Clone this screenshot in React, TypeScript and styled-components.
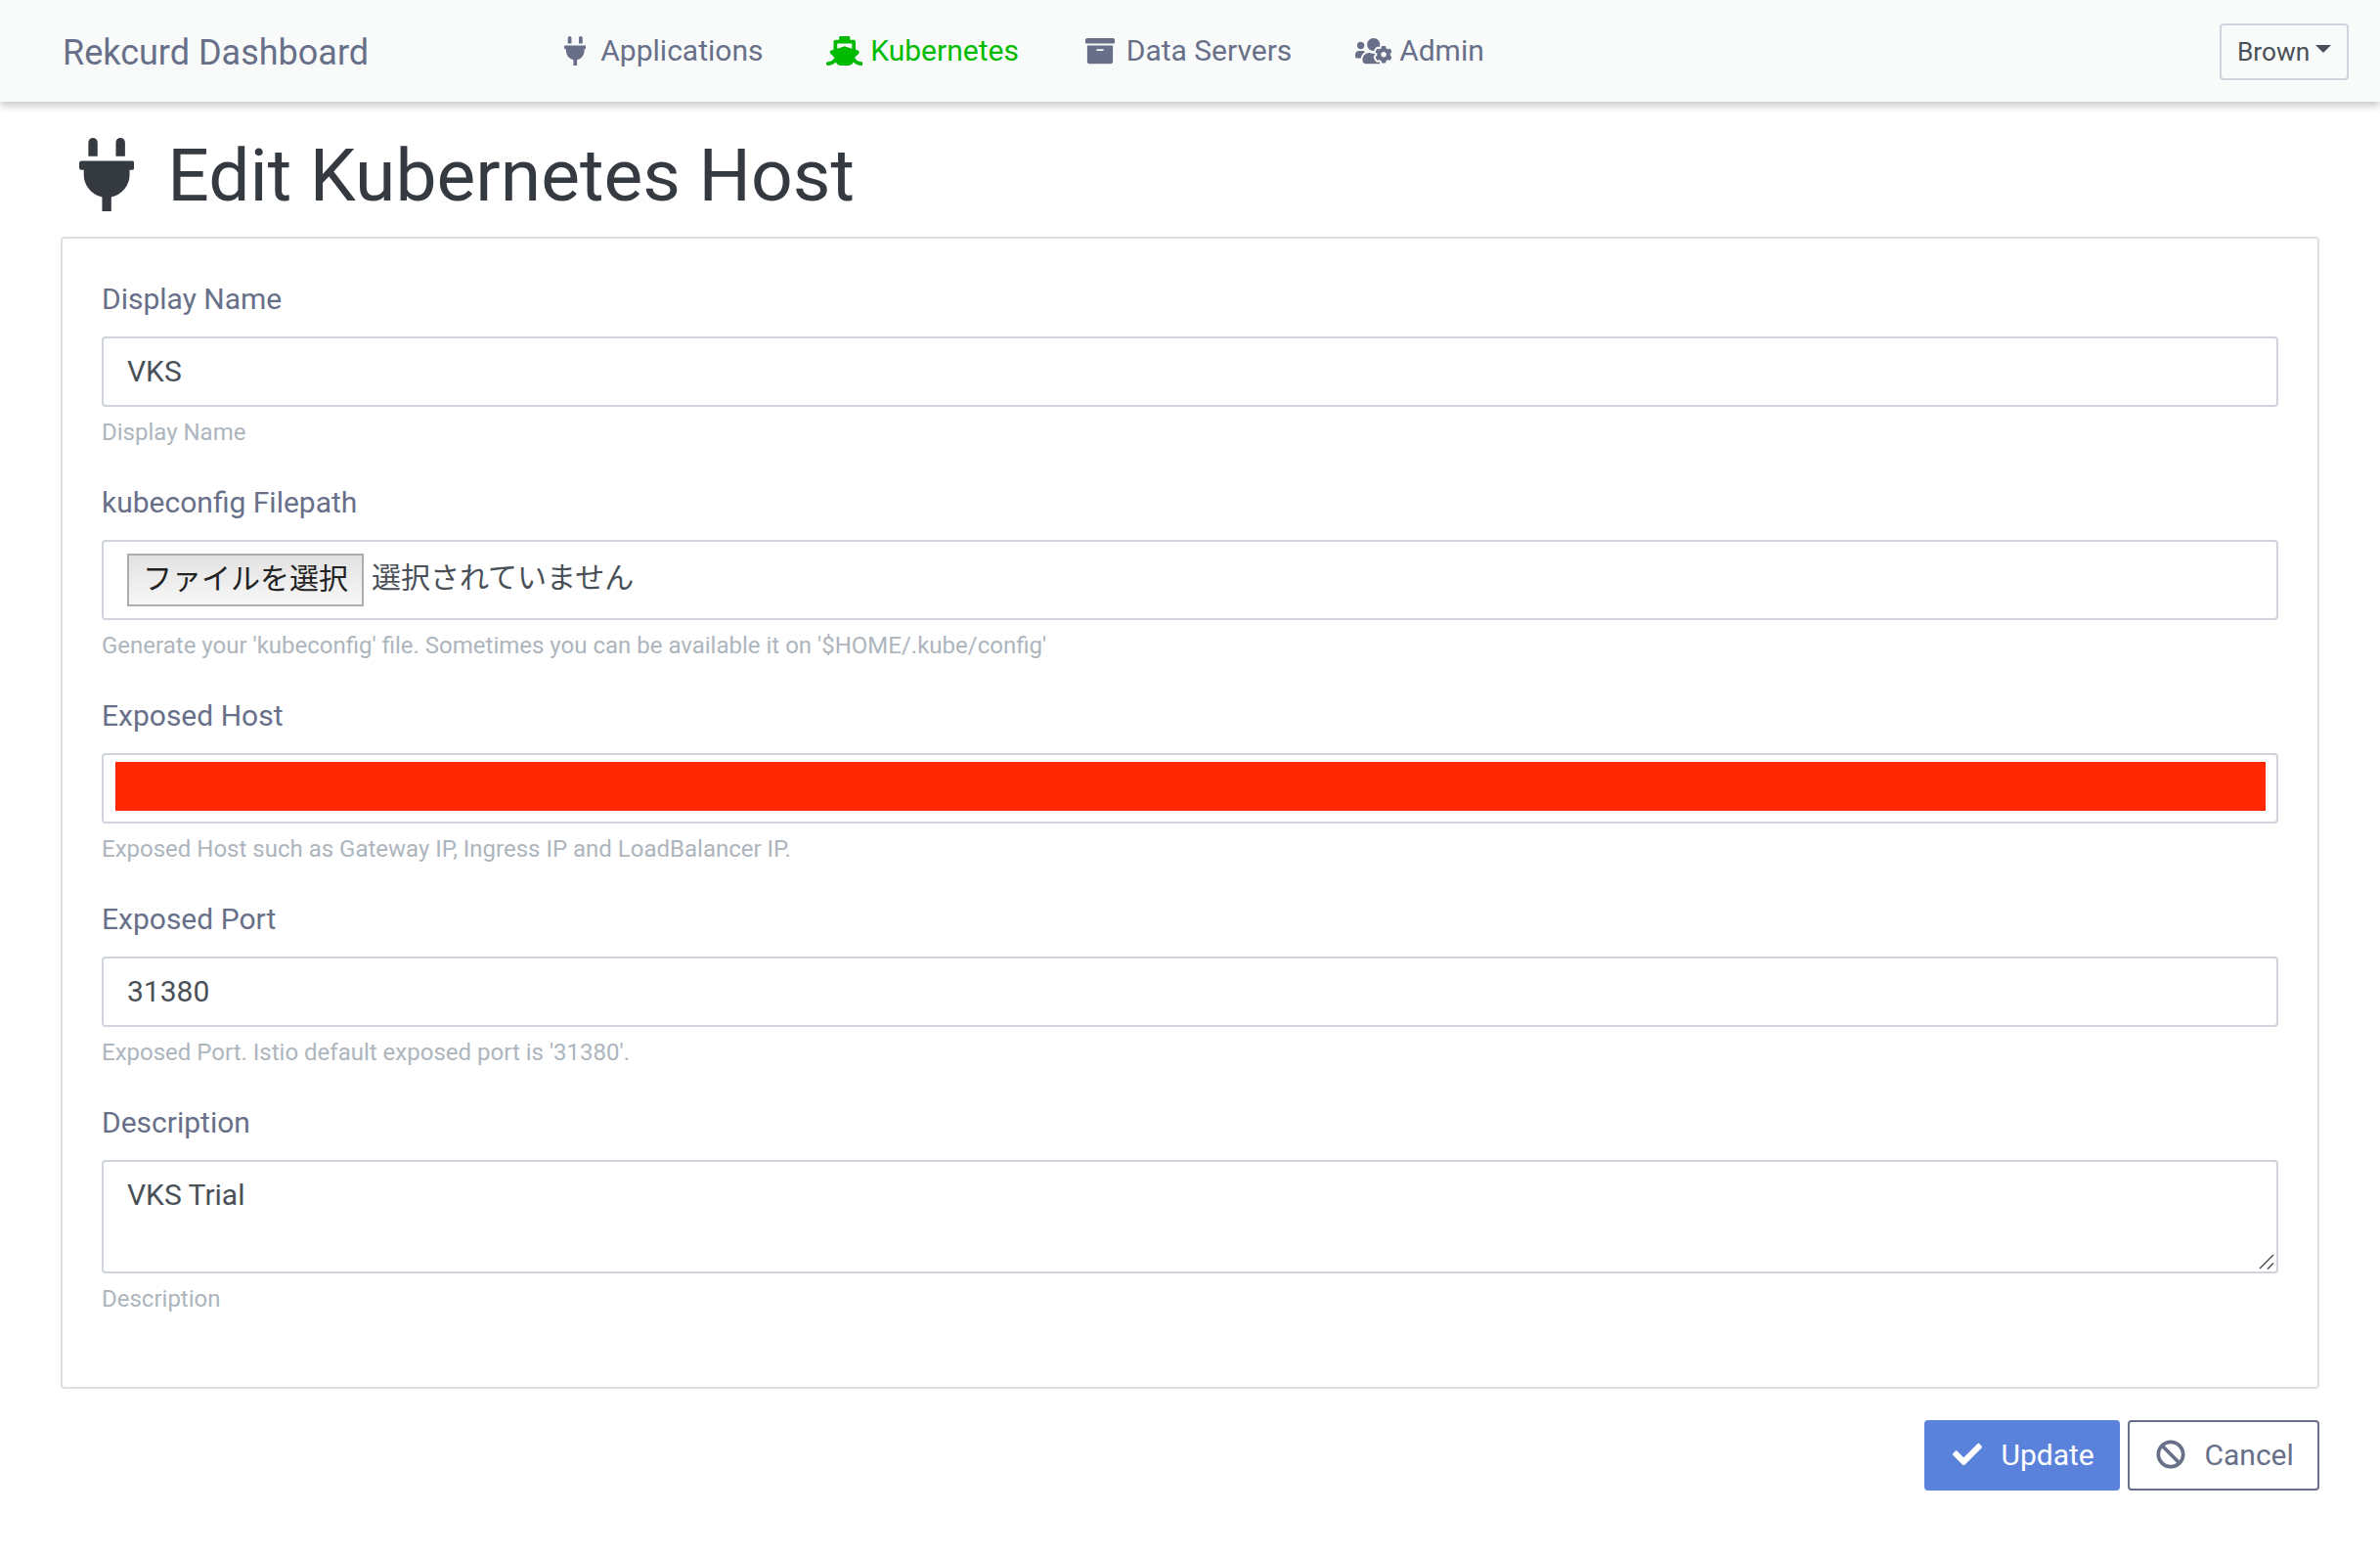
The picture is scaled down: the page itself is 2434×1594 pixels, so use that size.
import React from "react";
import styled, { createGlobalStyle, css } from "styled-components";
import { FaPlug, FaShip, FaArchive, FaUsersCog, FaCheck, FaBan } from "react-icons/fa";

const GlobalStyle = createGlobalStyle`
  * { box-sizing: border-box; }
  body {
    margin: 0;
    background: #fff;
    color: #687089;
    font-family: Roboto, "Noto Sans CJK JP", sans-serif;
    font-size: 30px;
    line-height: 45px;
  }
`;

const Header = styled.header`
  display: flex;
  align-items: flex-start;
  height: 104px;
  padding: 0 32px 0 64px;
  background: #f9fbfa;
  box-shadow: 0 4px 8px rgba(0, 0, 0, 0.22);
`;

const Brand = styled.a`
  width: 505px;
  padding-top: 27px;
  font-size: 36px;
  line-height: 54px;
`;

const Nav = styled.nav`
  display: flex;
  flex: 1;
  gap: 64.5px;
  padding-top: 29px;
`;

const NavLink = styled.a<{ $active?: boolean }>`
  display: flex;
  align-items: center;
  gap: 7.8px;
  color: ${(p) => (p.$active ? "#00bb00" : "#687089")};
`;

const IconSlot = styled.span<{ $width?: number }>`
  display: flex;
  justify-content: center;
  width: 37.5px;
  svg {
    flex: none;
    width: ${(p) => p.$width ?? 30}px;
    height: 30px;
  }
`;

const UserButton = styled.button`
  display: flex;
  align-items: center;
  width: 132px;
  height: 58px;
  margin-top: 24px;
  padding: 0 0 0 16px;
  border: 2px solid #ced4da;
  border-radius: 4px;
  background: #f9fbfa;
  color: #495057;
  font: 26.25px/40px Roboto, sans-serif;
`;

const Caret = styled.span`
  margin: -6px 0 0 6px;
  border: 8px solid transparent;
  border-top-color: currentColor;
  border-bottom: 0;
`;

const Main = styled.main`
  padding: 0 62px;
`;

const Title = styled.h1`
  display: flex;
  align-items: center;
  gap: 34px;
  height: 92px;
  margin: 29px 0 17px;
  padding-left: 19px;
  color: #343a40;
  font-size: 75px;
  font-weight: 400;
  line-height: 92px;
  svg { flex: none; width: 56.25px; height: 75px; margin-top: -2px; }
`;

const Card = styled.form`
  padding: 39px 40px 41px;
  border: 2px solid #dfdfdf;
  border-radius: 4px;
`;

const Group = styled.div`
  display: flex;
  flex-direction: column;
  margin-bottom: 31px;
`;

const Label = styled.label`
  height: 45px;
  margin-bottom: 16px;
`;

const Help = styled.small`
  height: 36px;
  margin-top: 8px;
  color: #adb5bd;
  font-size: 24px;
  line-height: 36px;
`;

const control = css`
  width: 100%;
  border: 2px solid #ced4da;
  border-radius: 4px;
  background: #fff;
  color: #495057;
  font: 30px/45px Roboto, "Noto Sans CJK JP", sans-serif;
  outline: none;
`;

const Input = styled.input`
  ${control}
  height: 72px;
  padding: 0 24px 2px;
`;

const FileInput = styled.div`
  ${control}
  display: flex;
  align-items: flex-start;
  gap: 8px;
  height: 82px;
  padding: 12px 24px;
`;

const FileButton = styled.button`
  width: 242px;
  height: 54px;
  padding: 0 0 8px;
  border: 2px solid #adadad;
  background: linear-gradient(#e2e2e2, #f7f7f7);
  color: #222;
  font: 30px/42px "Noto Sans CJK JP", sans-serif;
`;

const FileStatus = styled.span`
  line-height: 50px;
`;

const MaskedInput = styled.div`
  ${control}
  height: 72px;
  padding: 7px 11px 11px 11.5px;
`;

const Mask = styled.div`
  height: 50px;
  background: #ff2800;
`;

const TextBox = styled.div`
  ${control}
  display: flex;
  justify-content: space-between;
  height: 116px;
  padding: 11px 2px 2px 24px;
`;

const Grip = styled.svg`
  align-self: flex-end;
  width: 16px;
  height: 16px;
`;

const Actions = styled.div`
  display: flex;
  justify-content: flex-end;
  gap: 8px;
  margin-top: 32px;
`;

const ActionButton = styled.button<{ $primary?: boolean }>`
  display: flex;
  align-items: center;
  gap: 16px;
  width: ${(p) => (p.$primary ? 200 : 196)}px;
  height: 72px;
  padding: 0 0 2px 23px;
  border: 2px solid ${(p) => (p.$primary ? "#5a82da" : "#687089")};
  border-radius: 4px;
  background: ${(p) => (p.$primary ? "#5a82da" : "#fff")};
  color: ${(p) => (p.$primary ? "#fff" : "#687089")};
  font: 30px/45px Roboto, sans-serif;
`;

const links = [
  { label: "Applications", Icon: FaPlug, width: 22.5 },
  { label: "Kubernetes", Icon: FaShip, width: 37.5, active: true },
  { label: "Data Servers", Icon: FaArchive, width: 30 },
  { label: "Admin", Icon: FaUsersCog, width: 37.5 },
];

function Field({ label, help, children }: { label: string; help: string; children: React.ReactNode }) {
  return (
    <Group>
      <Label>{label}</Label>
      {children}
      <Help>{help}</Help>
    </Group>
  );
}

export default function App() {
  return (
    <>
      <GlobalStyle />
      <Header>
        <Brand>Rekcurd Dashboard</Brand>
        <Nav>
          {links.map(({ label, Icon, width, active }) => (
            <NavLink key={label} $active={active}>
              <IconSlot $width={width}><Icon /></IconSlot>
              {label}
            </NavLink>
          ))}
        </Nav>
        <UserButton>Brown<Caret /></UserButton>
      </Header>
      <Main>
        <Title><FaPlug />Edit Kubernetes Host</Title>
        <Card>
          <Field label="Display Name" help="Display Name">
            <Input defaultValue="VKS" />
          </Field>
          <Field
            label="kubeconfig Filepath"
            help="Generate your 'kubeconfig' file. Sometimes you can be available it on '$HOME/.kube/config'"
          >
            <FileInput>
              <FileButton type="button">ファイルを選択</FileButton>
              <FileStatus>選択されていません</FileStatus>
            </FileInput>
          </Field>
          <Field label="Exposed Host" help="Exposed Host such as Gateway IP, Ingress IP and LoadBalancer IP.">
            <MaskedInput><Mask /></MaskedInput>
          </Field>
          <Field label="Exposed Port" help="Exposed Port. Istio default exposed port is '31380'.">
            <Input defaultValue="31380" />
          </Field>
          <Field label="Description" help="Description">
            <TextBox>
              VKS Trial
              <Grip viewBox="0 0 16 16" fill="none" stroke="#444" strokeWidth="1.4">
                <path d="M1 15 15 1M9 15.500 15 9.500" />
              </Grip>
            </TextBox>
          </Field>
        </Card>
        <Actions>
          <ActionButton $primary>
            <IconSlot><FaCheck /></IconSlot>Update
          </ActionButton>
          <ActionButton>
            <IconSlot><FaBan /></IconSlot>Cancel
          </ActionButton>
        </Actions>
      </Main>
    </>
  );
}
